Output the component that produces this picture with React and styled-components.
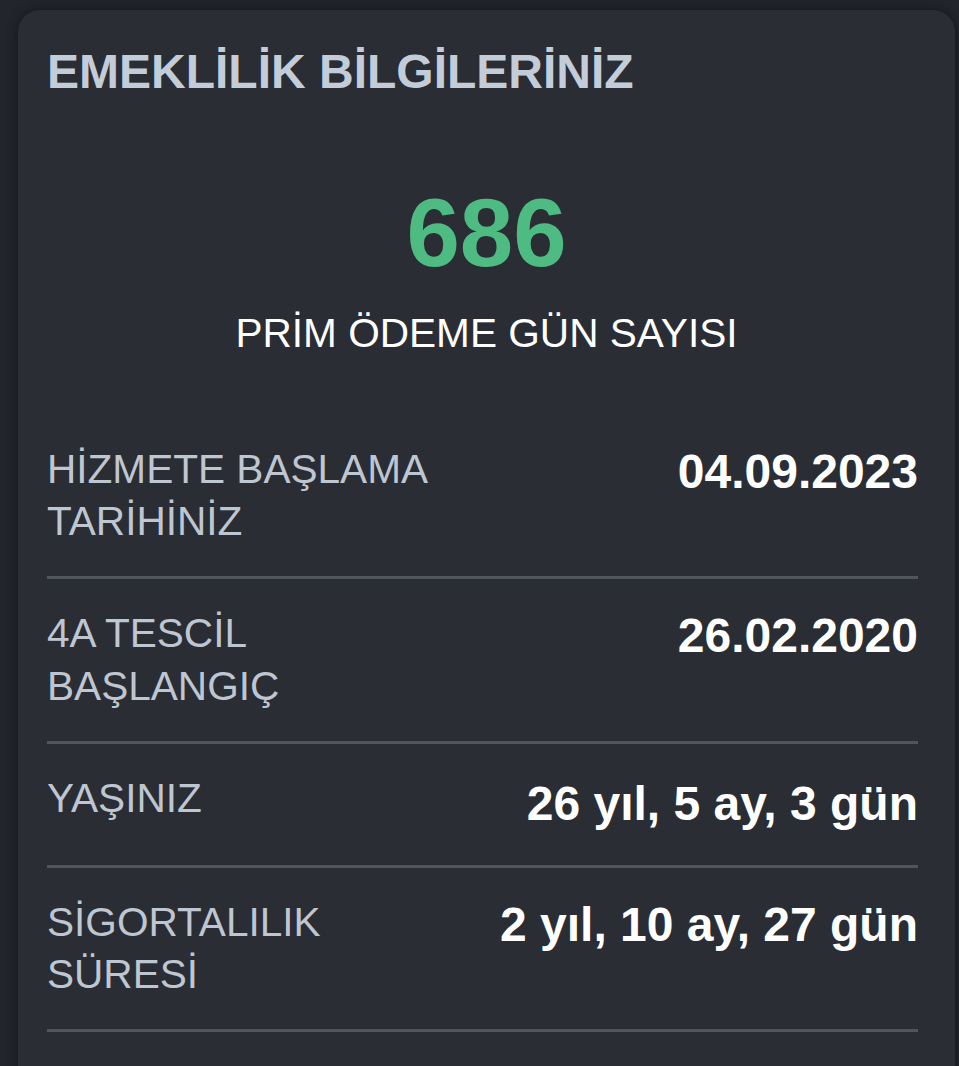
import React from "react";
import styled, { createGlobalStyle } from "styled-components";

const Global = createGlobalStyle`
  html, body {
    margin: 0;
    padding: 0;
    background: #22252b;
  }
  body {
    font-family: "Liberation Sans", Arial, sans-serif;
  }
`;

const Page = styled.div`
  padding: 10px 4px 0 18px;
  min-height: 1066px;
  box-sizing: border-box;
  overflow: hidden;
`;

const Card = styled.section`
  background: #2a2d34;
  border-radius: 22px;
  box-shadow: 0 0 12px rgba(0, 0, 0, 0.45);
  padding: 33px 37px 60px 29px;
`;

const Title = styled.h1`
  margin: 0;
  font-size: 48px;
  line-height: 1.2;
  font-weight: 700;
  color: #c3ccd9;
`;

const Hero = styled.div`
  display: flex;
  flex-direction: column;
  align-items: center;
  margin: 77px -37px 0 -29px;
`;

const BigNumber = styled.div`
  font-size: 96px;
  line-height: 1.15;
  font-weight: 700;
  color: #4dbb82;
`;

const Caption = styled.div`
  margin-top: 21px;
  font-size: 40.6px;
  line-height: 1.2;
  color: #ffffff;
`;

const List = styled.div`
  margin-top: 57px;
  display: flex;
  flex-direction: column;
`;

const Row = styled.div`
  display: flex;
  justify-content: space-between;
  align-items: flex-start;
  gap: 20px;
  padding: 28px 0;
  border-bottom: 3px solid #50545c;
`;

const Label = styled.div`
  flex: 0 1 410px;
  font-size: 40.6px;
  line-height: 1.3;
  color: #bec6d2;
`;

const Value = styled.div`
  font-size: 48px;
  line-height: ${(p) => (p.$tall ? 1.35 : 1.2)};
  font-weight: 700;
  color: #ffffff;
  white-space: nowrap;
  text-align: right;
`;

const rows = [
  { label: "HİZMETE BAŞLAMA TARİHİNİZ", value: "04.09.2023" },
  { label: "4A TESCİL BAŞLANGIÇ", value: "26.02.2020" },
  { label: "YAŞINIZ", value: "26 yıl, 5 ay, 3 gün", tall: true },
  { label: "SİGORTALILIK SÜRESİ", value: "2 yıl, 10 ay, 27 gün" },
];

export default function App() {
  return (
    <>
      <Global />
      <Page>
        <Card>
          <Title>EMEKLİLİK BİLGİLERİNİZ</Title>
          <Hero>
            <BigNumber>686</BigNumber>
            <Caption>PRİM ÖDEME GÜN SAYISI</Caption>
          </Hero>
          <List>
            {rows.map((r) => (
              <Row key={r.label}>
                <Label>{r.label}</Label>
                <Value $tall={r.tall}>{r.value}</Value>
              </Row>
            ))}
          </List>
        </Card>
      </Page>
    </>
  );
}
